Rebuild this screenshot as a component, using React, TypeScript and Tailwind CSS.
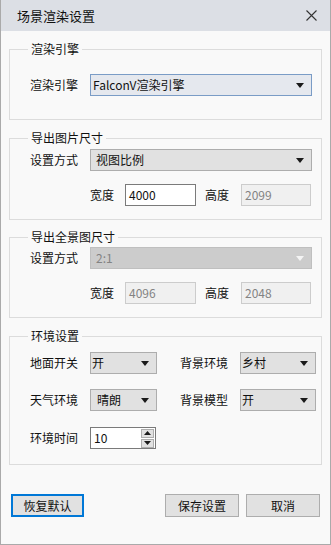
import React from "react";

const Arrow = ({ light = false }: { light?: boolean }) => (
  <svg width="8" height="5" viewBox="0 0 8 5" className="shrink-0">
    <path d="M0 0 H8 L4 5 Z" fill={light ? "#f4f4f4" : "#1a1a1a"} />
  </svg>
);

const Select = ({
  value,
  w,
  pl = "pl-[2px]",
  focused = false,
  disabled = false,
}: {
  value: string;
  w: string;
  pl?: string;
  focused?: boolean;
  disabled?: boolean;
}) => {
  const tone = disabled
    ? "bg-[#cccccc] border-[#bfbfbf] text-[#838383]"
    : focused
    ? "bg-[#e5e8ee] border-[#7a9cc6] text-[#111]"
    : "bg-[#e1e1e1] border-[#adadad] text-[#111]";
  return (
    <div className={`${w} h-[22px] border ${tone} flex items-center justify-between ${pl} pr-[7px]`}>
      <span className="leading-none">{value}</span>
      <Arrow light={disabled} />
    </div>
  );
};

const Input = ({ value, w, disabled = false }: { value: string; w: string; disabled?: boolean }) => (
  <div
    className={`${w} h-[22px] border flex items-center pl-[3px] ${
      disabled ? "bg-[#f0f0f0] border-[#cccccc] text-[#838383]" : "bg-white border-[#7a7a7a] text-[#111]"
    }`}
  >
    {value}
  </div>
);

const Group = ({ title, className, children }: { title: string; className: string; children: React.ReactNode }) => (
  <fieldset className={`border border-[#dcdcdc] mx-[8px] pl-[20px] pr-0 min-w-0 ${className}`}>
    <legend className="-ml-[2px] px-[3px] leading-[16px] text-[#111]">{title}</legend>
    {children}
  </fieldset>
);

const Label = ({ children, w = "w-[60px]" }: { children: React.ReactNode; w?: string }) => (
  <span className={`${w} shrink-0 text-[#111]`}>{children}</span>
);

export default function App() {
  return (
    <div className="w-[331px] h-[545px] flex flex-col bg-[#f9f9f9] border-x border-b border-[#aaaaaa] text-[12px] font-['Noto_Sans_CJK_SC',sans-serif] select-none overflow-hidden">
      <div className="h-[31px] -mx-px bg-[#dcdfe5] flex items-center justify-between pl-[17px] pr-[14px] shrink-0">
        <span className="text-[13px] text-[#111]">场景渲染设置</span>
        <svg width="11" height="11" viewBox="0 0 11 11">
          <path d="M0.5 0.5 L10.5 10.5 M10.5 0.5 L0.5 10.5" stroke="#333" strokeWidth="1.1" />
        </svg>
      </div>

      <Group title="渲染引擎" className="mt-[10px] pb-[23px]">
        <div className="flex items-center mt-[17px]">
          <Label>渲染引擎</Label>
          <Select value="FalconV渲染引擎" w="w-[222px]" focused />
        </div>
      </Group>

      <Group title="导出图片尺寸" className="mt-[10px] pb-[13px]">
        <div className="flex items-center mt-[3px]">
          <Label>设置方式</Label>
          <Select value="视图比例" w="w-[222px]" pl="pl-[5px]" />
        </div>
        <div className="flex items-center mt-[13px] pl-[60px]">
          <Label w="w-[35px]">宽度</Label>
          <Input value="4000" w="w-[71px]" />
          <Label w="w-[45px] pl-[9px]">高度</Label>
          <Input value="2099" w="w-[70px]" disabled />
        </div>
      </Group>

      <Group title="导出全景图尺寸" className="mt-[9px] pb-[13px]">
        <div className="flex items-center mt-[2px]">
          <Label>设置方式</Label>
          <Select value="2:1" w="w-[222px]" pl="pl-[5px]" disabled />
        </div>
        <div className="flex items-center mt-[13px] pl-[60px]">
          <Label w="w-[35px]">宽度</Label>
          <Input value="4096" w="w-[71px]" disabled />
          <Label w="w-[45px] pl-[9px]">高度</Label>
          <Input value="2048" w="w-[70px]" disabled />
        </div>
      </Group>

      <Group title="环境设置" className="mt-[10px] pb-[15px]">
        <div className="flex items-center mt-[8px]">
          <Label>地面开关</Label>
          <Select value="开" w="w-[67px]" pl="pl-[1px]" />
          <Label w="w-[83px] pl-[23px]">背景环境</Label>
          <Select value="乡村" w="w-[76px]" pl="pl-[1px]" />
        </div>
        <div className="flex items-center mt-[15px]">
          <Label>天气环境</Label>
          <Select value="晴朗" w="w-[67px]" pl="pl-[6px]" />
          <Label w="w-[83px] pl-[23px]">背景模型</Label>
          <Select value="开" w="w-[76px]" pl="pl-[1px]" />
        </div>
        <div className="flex items-center mt-[16px]">
          <Label>环境时间</Label>
          <div className="w-[66px] h-[22px] bg-white border border-[#7a7a7a] flex items-center justify-between pl-[3px] pr-px text-[#111]">
            <span>10</span>
            <div className="flex flex-col gap-px">
              <div className="w-[13px] h-[9px] bg-[#e1e1e1] border border-[#adadad] flex items-center justify-center">
                <svg width="7" height="4" viewBox="0 0 7 4">
                  <path d="M0 4 H7 L3.5 0 Z" fill="#1a1a1a" />
                </svg>
              </div>
              <div className="w-[13px] h-[9px] bg-[#e1e1e1] border border-[#adadad] flex items-center justify-center">
                <svg width="7" height="4" viewBox="0 0 7 4">
                  <path d="M0 0 H7 L3.5 4 Z" fill="#1a1a1a" />
                </svg>
              </div>
            </div>
          </div>
        </div>
      </Group>

      <div className="flex items-center mt-[29px] pl-[10px] pr-[10px]">
        <button className="w-[73px] h-[23px] border-2 border-[#0078d7] bg-[#e1e1e1] text-[#111] leading-none">
          恢复默认
        </button>
        <button className="ml-auto w-[74px] h-[23px] border border-[#adadad] bg-[#e1e1e1] text-[#111] leading-none">
          保存设置
        </button>
        <button className="ml-[7px] w-[74px] h-[23px] border border-[#adadad] bg-[#e1e1e1] text-[#111] leading-none">
          取消
        </button>
      </div>
    </div>
  );
}
